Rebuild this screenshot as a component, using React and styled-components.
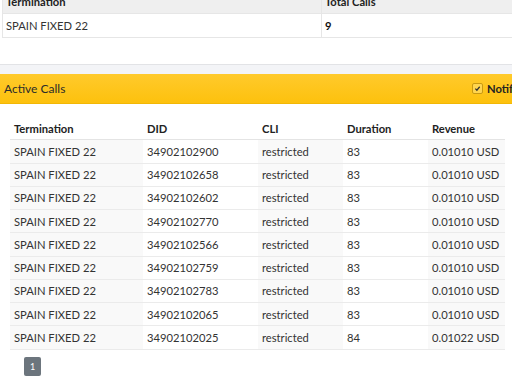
import styled, { createGlobalStyle } from 'styled-components'

const Global = createGlobalStyle`
  html, body {
    margin: 0;
    padding: 0;
    overflow: hidden;
    background: #f3f4f7;
    font-family: Lato, "Open Sans", sans-serif;
    font-size: 11.2px;
    color: #333;
  }
`

const Page = styled.div`
  width: 620px;
`

const SummaryCard = styled.div`
  background: #fff;
  margin-top: -10px;
  padding: 0 0 26px 2px;
  border-bottom: 1px solid #e2e3e6;
`

const SummaryTable = styled.table`
  width: 100%;
  border-collapse: collapse;
  border-left: 1px solid #e6e6e6;
  th, td {
    height: 23px;
    padding: 0 3px;
    text-align: left;
    border-bottom: 1px solid #e6e6e6;
  }
  th {
    background: #efefef;
    font-weight: 700;
    color: #222;
  }
  th:first-child, td:first-child {
    width: 312px;
    border-right: 1px solid #e6e6e6;
  }
`

const Strong = styled.span`
  font-weight: 700;
  color: #111;
`

const Panel = styled.div`
  margin-top: 9px;
  background: #fff;
`

const PanelHeader = styled.div`
  height: 30px;
  display: flex;
  align-items: center;
  padding: 0 4px;
  background: linear-gradient(#ffca2c, #fdc10d);
  border-bottom: 1px solid #f2b705;
  box-sizing: border-box;
`

const PanelTitle = styled.div`
  flex: 0 0 468px;
  font-size: 12px;
  color: #2b2b2b;
`

const Toggle = styled.label`
  display: flex;
  align-items: center;
  gap: 4px;
  font-weight: 700;
  color: #222;
`

const Box = styled.span`
  width: 9px;
  height: 9px;
  border: 1px solid #c99a12;
  border-radius: 2px;
  background: #ffd54f;
  display: flex;
  align-items: center;
  justify-content: center;
`

const PanelBody = styled.div`
  padding: 13px 0 9px 10px;
`

const CallsTable = styled.table`
  width: 495px;
  border-collapse: collapse;
  th, td {
    height: 22.25px;
    padding: 0 0 0 4px;
    text-align: left;
    border-bottom: 1px solid #ebebeb;
  }
  th {
    font-weight: 700;
    color: #222;
    border-bottom: 1px solid #e4e4e4;
  }
  td:nth-child(odd) {
    background: #f9f9f9;
  }
`

const Col = styled.col`
  width: ${p => p.$w}px;
`

const Pager = styled.div`
  margin: 7px 0 0 14px;
  display: flex;
`

const PageButton = styled.span`
  width: 17px;
  height: 19px;
  border-radius: 2px;
  background: #6c757d;
  color: #fff;
  font-size: 9px;
  display: flex;
  align-items: center;
  justify-content: center;
`

const calls = [
  ['34902102900', '83', '0.01010'],
  ['34902102658', '83', '0.01010'],
  ['34902102602', '83', '0.01010'],
  ['34902102770', '83', '0.01010'],
  ['34902102566', '83', '0.01010'],
  ['34902102759', '83', '0.01010'],
  ['34902102783', '83', '0.01010'],
  ['34902102065', '83', '0.01010'],
  ['34902102025', '84', '0.01022'],
]

export default function App() {
  return (
    <Page>
      <Global />
      <SummaryCard>
        <SummaryTable>
          <thead>
            <tr>
              <th>Termination</th>
              <th>Total Calls</th>
            </tr>
          </thead>
          <tbody>
            <tr>
              <td>SPAIN FIXED 22</td>
              <td><Strong>9</Strong></td>
            </tr>
          </tbody>
        </SummaryTable>
      </SummaryCard>

      <Panel>
        <PanelHeader>
          <PanelTitle>Active Calls</PanelTitle>
          <Toggle>
            <Box>
              <svg width="7" height="7" viewBox="0 0 8 8">
                <path d="M1.5 4.2 L3.3 6 L6.5 2" fill="none" stroke="#333" strokeWidth="1.4" />
              </svg>
            </Box>
            Notifications
          </Toggle>
        </PanelHeader>
        <PanelBody>
          <CallsTable>
            <colgroup>
              <Col $w={133} />
              <Col $w={115} />
              <Col $w={85} />
              <Col $w={85} />
              <Col $w={77} />
            </colgroup>
            <thead>
              <tr>
                <th>Termination</th>
                <th>DID</th>
                <th>CLI</th>
                <th>Duration</th>
                <th>Revenue</th>
              </tr>
            </thead>
            <tbody>
              {calls.map(([did, dur, rev]) => (
                <tr key={did}>
                  <td>SPAIN FIXED 22</td>
                  <td>{did}</td>
                  <td>restricted</td>
                  <td>{dur}</td>
                  <td>{rev} USD</td>
                </tr>
              ))}
            </tbody>
          </CallsTable>
          <Pager>
            <PageButton>1</PageButton>
          </Pager>
        </PanelBody>
      </Panel>
    </Page>
  )
}
